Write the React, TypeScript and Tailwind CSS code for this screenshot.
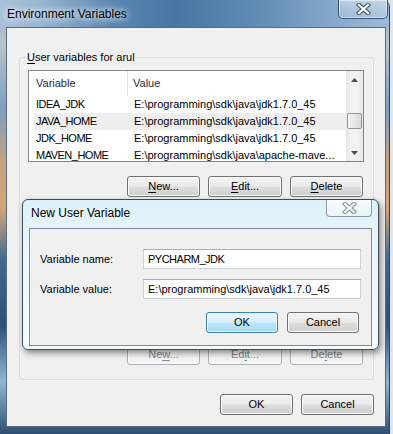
import React from "react";

type Kind = "normal" | "default" | "disabled";

const btnClass: Record<Kind, string> = {
  normal:
    "border-[#707070] text-black bg-[linear-gradient(180deg,#f2f2f2_0%,#ebebeb_48%,#dddddd_52%,#cfcfcf_100%)] shadow-[inset_0_0_0_1px_#fcfcfc]",
  default:
    "border-[#3c7fb1] text-black bg-[linear-gradient(180deg,#eaf6fd_0%,#d9f0fc_48%,#bee6fd_52%,#a7d9f5_100%)] shadow-[inset_0_0_0_1px_#f2fbff]",
  disabled: "border-[#adb2b5] text-[#838383] bg-[#f4f4f4] shadow-[inset_0_0_0_1px_#fafafa]",
};

const Btn = ({ children, kind = "normal", w = "w-[73px]" }: { children: React.ReactNode; kind?: Kind; w?: string }) => (
  <div className={`${w} h-[21px] shrink-0 flex items-center justify-center rounded-[3px] border ${btnClass[kind]}`}>
    <span className="leading-none">{children}</span>
  </div>
);

const U = ({ c }: { c: string }) => <span className="underline underline-offset-[2px]">{c}</span>;

const XGlyph = ({ outer, inner }: { outer: string; inner: string }) => (
  <svg width="15" height="12" viewBox="0 0 15 12">
    <path d="M3 2 L12 10 M12 2 L3 10" stroke={outer} strokeWidth="4.4" strokeLinecap="square" />
    <path d="M3 2 L12 10 M12 2 L3 10" stroke={inner} strokeWidth="2.2" strokeLinecap="square" />
  </svg>
);

const vars = [
  { name: "IDEA_JDK", value: "E:\\programming\\sdk\\java\\jdk1.7.0_45" },
  { name: "JAVA_HOME", value: "E:\\programming\\sdk\\java\\jdk1.7.0_45", hot: true },
  { name: "JDK_HOME", value: "E:\\programming\\sdk\\java\\jdk1.7.0_45" },
  { name: "MAVEN_HOME", value: "E:\\programming\\sdk\\java\\apache-mave..." },
];

const Arrow = ({ up }: { up?: boolean }) => (
  <svg width="7" height="4" viewBox="0 0 7 4">
    <polygon points={up ? "0,4 7,4 3.5,0" : "0,0 7,0 3.5,4"} fill="#4d4d4d" />
  </svg>
);

export default function App() {
  return (
    <div className="w-[393px] h-[434px] overflow-hidden bg-[#dfe5eb] font-['Liberation_Sans',Arial,sans-serif] text-[11px] text-black">
      <div className="relative w-[390px] h-[434px] flex flex-col rounded-tr-[7px] border-r border-[#2b4660] bg-[linear-gradient(180deg,#8fb0cf_0%,#b9c4cc_10%,#7c9fc0_25%,#c8a27c_38%,#d2a677_48%,#3f6990_60%,#2b5378_75%,#8fb6d6_88%,#2d5070_100%)]">
        {/* title bar */}
        <div className="h-[27px] shrink-0 flex items-center pl-[7px] rounded-tr-[7px] bg-[linear-gradient(90deg,#aac2da_0%,#98b5d1_10%,#5a86b0_30%,#4776a2_45%,#5f8ab3_65%,#85a8ca_85%,#9dbbd6_100%)]">
          <span className="text-[12px] [text-shadow:0_0_6px_#fff,0_0_10px_#fff]">Environment Variables</span>
        </div>
        <div className="absolute left-[338px] top-0 w-[50px] h-[19px] flex items-center justify-center rounded-b-[5px] border border-t-0 border-[#3a5573] bg-[linear-gradient(180deg,rgba(255,255,255,0.4),rgba(255,255,255,0.15))] shadow-[inset_0_0_0_1px_rgba(255,255,255,0.5)]">
          <XGlyph outer="#4a5d70" inner="#ffffff" />
        </div>

        {/* client area */}
        <div className="ml-[6px] w-[380px] h-[400px] shrink-0 border border-[#5d6b78] bg-[#f0f0f0] flex flex-col">
          {/* group box */}
          <div className="relative ml-[12px] mt-[29px] w-[355px] h-[323px] border border-[#d5dfe5] rounded-[3px] pt-[12px] pl-[8px] pr-[9px] flex flex-col">
            <span className="absolute left-[6px] -top-[8px] px-[1px] leading-[14px] bg-[#f0f0f0]">
              <U c="U" />ser variables for arul
            </span>

            {/* list view */}
            <div className="w-[336px] h-[92px] shrink-0 border border-[#828790] bg-white flex">
              <div className="w-[317px] flex flex-col overflow-hidden">
                <div className="h-[25px] shrink-0 flex text-[#1e2a3a]">
                  <div className="w-[99px] border-r border-[#e5e5e5] pl-[7px] flex items-center">Variable</div>
                  <div className="flex-1 pl-[5px] flex items-center">Value</div>
                </div>
                <div className="pl-[5px] flex flex-col">
                  {vars.map((v) => (
                    <div key={v.name} className={`h-[17px] shrink-0 flex items-center ${v.hot ? "bg-[#efefef]" : ""}`}>
                      <div className="w-[95px] pl-[2px] whitespace-nowrap tracking-[-0.5px]">{v.name}</div>
                      <div className="flex-1 pl-[5px] whitespace-nowrap overflow-hidden">{v.value}</div>
                    </div>
                  ))}
                </div>
              </div>
              <div className="w-[17px] flex flex-col bg-[linear-gradient(90deg,#e6e6e6,#f2f2f2_30%,#f2f2f2_70%,#e6e6e6)]">
                <div className="h-[17px] flex items-center justify-center">
                  <Arrow up />
                </div>
                <div className="flex-1 pt-[25px] px-[1px]">
                  <div className="h-[16px] rounded-[2px] border border-[#979797] bg-[linear-gradient(90deg,#f4f4f4,#e6e6e6_50%,#d9d9d9)]" />
                </div>
                <div className="h-[17px] flex items-center justify-center">
                  <Arrow />
                </div>
              </div>
            </div>

            <div className="mt-[14px] flex justify-end gap-[8px] pr-[1px]">
              <Btn>
                <U c="N" />ew...
              </Btn>
              <Btn w="w-[74px]">
                <U c="E" />dit...
              </Btn>
              <Btn>
                <U c="D" />elete
              </Btn>
            </div>

            <div className="mt-[147px] flex justify-end gap-[8px] pr-[1px]">
              <Btn kind="disabled">
                Ne<U c="w" />...
              </Btn>
              <Btn kind="disabled" w="w-[74px]">
                Ed<U c="i" />t...
              </Btn>
              <Btn kind="disabled">
                De<U c="l" />ete
              </Btn>
            </div>
          </div>

          <div className="mt-[14px] flex justify-end gap-[8px] pr-[11px]">
            <Btn>OK</Btn>
            <Btn>Cancel</Btn>
          </div>
        </div>

        {/* New User Variable dialog */}
        <div className="absolute left-[22px] top-[199px] w-[357px] h-[151px] flex flex-col rounded-[6px] border border-[#3e4a56] bg-[linear-gradient(180deg,#dcf1f8_0%,#ecf8fb_40%,#f3fbfd_100%)] shadow-[2px_3px_6px_rgba(0,0,0,0.45)]">
          <div className="h-[28px] shrink-0 flex items-center pl-[8px] pb-[2px]">
            <span className="text-[12px] [text-shadow:0_0_6px_#fff]">New User Variable</span>
          </div>
          <div className="absolute right-[6px] top-0 w-[46px] h-[17px] flex items-center justify-center rounded-b-[4px] border border-t-0 border-[#8c9aa6] bg-[linear-gradient(180deg,#f7fcfe,#e8f4f8)]">
            <XGlyph outer="#8e98a2" inner="#f6f8fa" />
          </div>
          <div className="ml-[6px] w-[343px] h-[118px] shrink-0 border border-[#7d8b98] bg-[#f0f0f0] pt-[20px] pl-[10px] pr-[10px] flex flex-col">
            <div className="flex items-center">
              <div className="w-[103px]">Variable name:</div>
              <div className="w-[218px] h-[20px] border border-[#cdd1d6] border-t-[#abadb3] bg-white pl-[4px] flex items-center tracking-[-0.5px]">PYCHARM_JDK</div>
            </div>
            <div className="mt-[10px] flex items-center">
              <div className="w-[103px]">Variable value:</div>
              <div className="w-[218px] h-[20px] border border-[#cdd1d6] border-t-[#abadb3] bg-white pl-[4px] flex items-center whitespace-nowrap overflow-hidden">
                E:\programming\sdk\java\jdk1.7.0_45
              </div>
            </div>
            <div className="mt-[13px] flex justify-end gap-[9px] pr-[2px]">
              <Btn kind="default" w="w-[72px]">
                OK
              </Btn>
              <Btn w="w-[72px]">Cancel</Btn>
            </div>
          </div>
        </div>
      </div>
    </div>
  );
}
